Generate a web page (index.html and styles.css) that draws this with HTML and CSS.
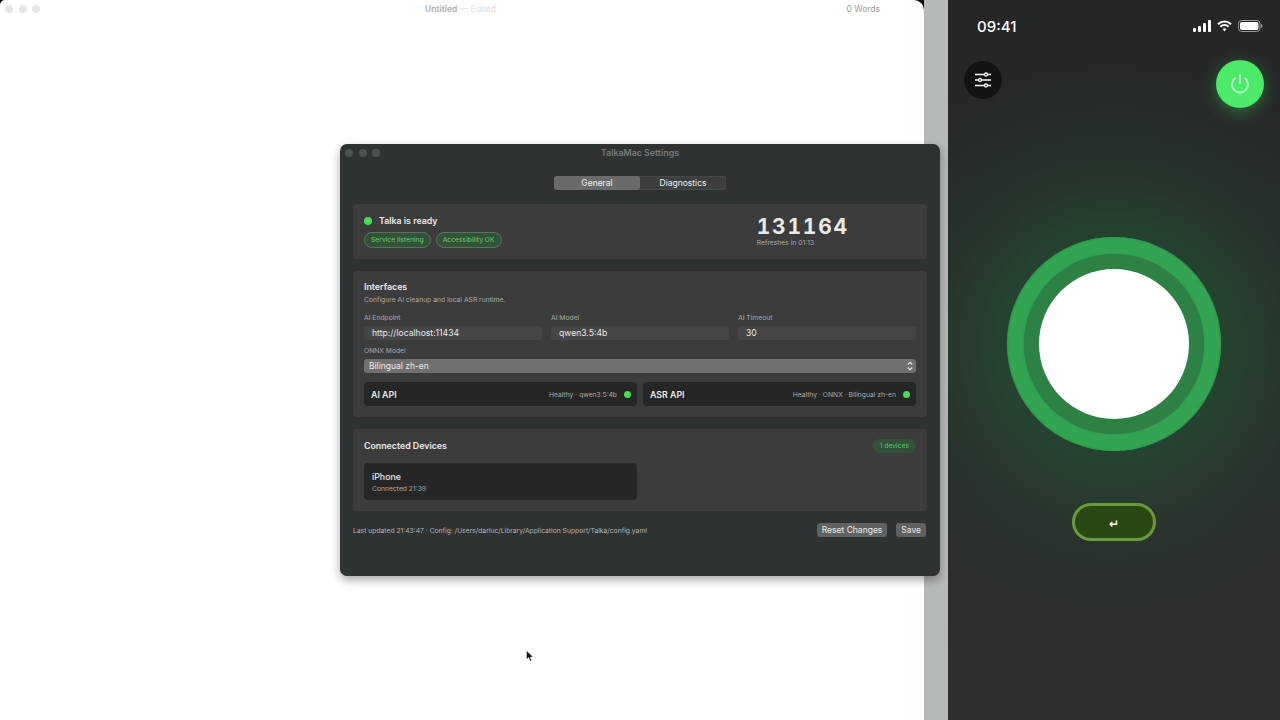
FILE: index.html
```html
<!DOCTYPE html>
<html lang="en">
<head>
  <meta charset="UTF-8">
  <title>TalkaMac Settings</title>
  <link rel="stylesheet" href="styles.css">
</head>
<body>

<div class="desktop">

  <div class="editor">
    <div class="editor-bar">
      <div class="lights lights-light"><i></i><i></i><i></i></div>
      <div class="doc-title"><strong>Untitled</strong> <span>— Edited</span></div>
      <div class="word-count">0 Words</div>
    </div>
  </div>

  <div class="strip"></div>

  <div class="phone">
    <div class="status-bar">
      <span class="clock">09:41</span>
      <div class="status-icons">
        <svg width="18" height="12" viewBox="0 0 18 12" fill="#fff"><rect x="0" y="8" width="3" height="4" rx="1"/><rect x="5" y="6" width="3" height="6" rx="1"/><rect x="10" y="3" width="3" height="9" rx="1"/><rect x="15" y="0" width="3" height="12" rx="1"/></svg>
        <svg width="15" height="12" viewBox="0 0 15 12" fill="none" stroke="#fff" stroke-width="2"><path d="M1 4.200a9.200 9.200 0 0 1 13 0"/><path d="M3.400 6.700a5.800 5.800 0 0 1 8.200 0"/><path d="M7.500 11.400 5.600 9.100a2.800 2.800 0 0 1 3.800 0z" fill="#fff" stroke="none"/></svg>
        <svg width="25" height="12" viewBox="0 0 25 12"><rect x=".5" y=".5" width="21.500" height="11" rx="3.200" fill="none" stroke="#999"/><rect x="2" y="2" width="18.500" height="8" rx="2" fill="#fff"/><path d="M23 4v4c.9-.3 1.500-1 1.500-2s-.6-1.700-1.500-2z" fill="#999"/></svg>
      </div>
    </div>

    <div class="phone-actions">
      <button class="menu-btn">
        <svg width="18" height="16" viewBox="0 0 18 16" fill="none" stroke="#fff" stroke-width="1.300"><path d="M1 2.500h16M1 8h16M1 13.500h16"/><circle cx="12" cy="2.500" r="1.500" fill="#131313"/><circle cx="6" cy="8" r="1.500" fill="#131313"/><circle cx="12" cy="13.500" r="1.500" fill="#131313"/></svg>
      </button>
      <button class="power-btn">
        <svg width="22" height="22" viewBox="0 0 22 22" fill="none" stroke="#b9f7c6" stroke-width="2" stroke-linecap="round"><path d="M11 2v8"/><path d="M6 5.200a8 8 0 1 0 10 0"/></svg>
      </button>
    </div>

    <div class="ring-outer">
      <div class="ring-inner">
        <div class="ring-core"></div>
      </div>
    </div>

    <button class="enter-btn">↵</button>
  </div>

  <div class="settings">
    <div class="settings-bar">
      <div class="lights lights-dark"><i></i><i></i><i></i></div>
      <span class="settings-title">TalkaMac Settings</span>
    </div>

    <div class="settings-body">
      <div class="tabs">
        <div class="tab tab-active">General</div>
        <div class="tab">Diagnostics</div>
      </div>

      <section class="card card-status">
        <div>
          <div class="ready"><i class="dot"></i>Talka is ready</div>
          <div class="pills">
            <span class="pill">Service listening</span>
            <span class="pill">Accessibility OK</span>
          </div>
        </div>
        <div class="pairing">
          <div class="code">131164</div>
          <div class="small muted">Refreshes in 01:13</div>
        </div>
      </section>

      <section class="card card-interfaces">
        <h2>Interfaces</h2>
        <p class="small muted subtitle">Configure AI cleanup and local ASR runtime.</p>

        <div class="fields">
          <div class="field">
            <div class="small muted">AI Endpoint</div>
            <div class="input">http://localhost:11434</div>
          </div>
          <div class="field">
            <div class="small muted">AI Model</div>
            <div class="input">qwen3.5:4b</div>
          </div>
          <div class="field">
            <div class="small muted">AI Timeout</div>
            <div class="input">30</div>
          </div>
        </div>

        <div class="small muted onnx-label">ONNX Model</div>
        <div class="select">
          <span>Bilingual zh-en</span>
          <svg width="6" height="10" viewBox="0 0 6 10" fill="none" stroke="#e8e8e8" stroke-width="1.100"><path d="M.8 3.500 3 1.200l2.200 2.300M.8 6.500 3 8.800l2.200-2.300"/></svg>
        </div>

        <div class="apis">
          <div class="api">
            <b>AI API</b>
            <span class="small muted api-state">Healthy · qwen3.5:4b</span>
            <i class="dot"></i>
          </div>
          <div class="api">
            <b>ASR API</b>
            <span class="small muted api-state">Healthy · ONNX · Bilingual zh-en</span>
            <i class="dot"></i>
          </div>
        </div>
      </section>

      <section class="card card-devices">
        <div class="devices-head">
          <h2>Connected Devices</h2>
          <span class="badge">1 devices</span>
        </div>
        <div class="device">
          <b>iPhone</b>
          <div class="small muted">Connected 21:39</div>
        </div>
      </section>

      <div class="settings-foot">
        <span class="small foot-text">Last updated 21:43:47 · Config: /Users/darluc/Library/Application Support/Talka/config.yaml</span>
        <button class="btn">Reset Changes</button>
        <button class="btn">Save</button>
      </div>
    </div>
  </div>

  <svg class="cursor" width="8" height="12" viewBox="0 0 8 12"><path d="M.5.500v9l2.200-2 1.500 3.800 1.500-.6-1.500-3.600h3z" fill="#111" stroke="#fff" stroke-width=".5"/></svg>
</div>

</body>
</html>
```

FILE: styles.css
```css
* {
  box-sizing: border-box;
}

body {
  margin: 0;
  font-family: 'Inter', 'Liberation Sans', sans-serif;
  background: #000;
}

h2, p {
  margin: 0;
}

button {
  font-family: inherit;
  border: none;
  padding: 0;
}

.desktop {
  position: relative;
  display: flex;
  width: 1280px;
  height: 720px;
  overflow: hidden;
}

/* text editor behind the settings window */
.editor {
  width: 924px;
  height: 720px;
  background: #fff;
  border-radius: 5px 10px 0 0;
}

.editor-bar {
  position: relative;
  display: flex;
  align-items: center;
  height: 17px;
  padding: 0 44px 0 5px;
  font-size: 8.500px;
}

.lights {
  display: flex;
  gap: 5.500px;
}

.lights i {
  display: block;
  width: 8px;
  height: 8px;
  border-radius: 50%;
}

.lights-light i {
  background: #e6e6e6;
}

.lights-dark i {
  background: #4d5050;
}

.doc-title {
  margin-left: 385px;
  color: #e0e0e0;
}

.doc-title strong {
  font-weight: 600;
  color: #aeaeae;
}

.word-count {
  margin-left: auto;
  color: #9a9a9a;
}

.strip {
  width: 24px;
  background: #b6b9b9;
}

/* phone */
.phone {
  display: flex;
  flex-direction: column;
  align-items: center;
  width: 332px;
  background:
    radial-gradient(circle at 166px 344px, rgba(32, 100, 55, 0.55) 0, rgba(32, 96, 52, 0.42) 115px, rgba(32, 90, 50, 0.12) 200px, rgba(32, 90, 50, 0) 290px),
    linear-gradient(#252727, #2e3030);
  color: #fff;
}

.status-bar {
  display: flex;
  align-items: center;
  justify-content: space-between;
  width: 100%;
  height: 18px;
  margin-top: 17px;
  padding: 0 17px 0 29px;
}

.clock {
  font-size: 15px;
  font-weight: 500;
}

.status-icons {
  display: flex;
  align-items: center;
  gap: 6px;
}

.phone-actions {
  display: flex;
  align-items: flex-start;
  justify-content: space-between;
  width: 100%;
  margin-top: 25px;
  padding: 0 16px;
}

.menu-btn {
  display: flex;
  align-items: center;
  justify-content: center;
  width: 38px;
  height: 38px;
  margin-top: 1px;
  border-radius: 50%;
  background: #131313;
}

.power-btn {
  display: flex;
  align-items: center;
  justify-content: center;
  width: 48px;
  height: 48px;
  border-radius: 50%;
  background: #4bea68;
  box-shadow: 0 4px 16px rgba(75, 234, 104, 0.35);
}

.ring-outer {
  display: flex;
  align-items: center;
  justify-content: center;
  width: 214px;
  height: 214px;
  margin-top: 129px;
  border-radius: 50%;
  background: #33a552;
  box-shadow: inset 0 0 2px #2a7f48, 0 0 1px #2e8a4b;
}

.ring-inner {
  display: flex;
  align-items: center;
  justify-content: center;
  width: 180px;
  height: 180px;
  border-radius: 50%;
  background: #2d8145;
  box-shadow: 0 0 2px #2d8145;
}

.ring-core {
  width: 150px;
  height: 150px;
  border-radius: 50%;
  background: #fff;
}

.enter-btn {
  width: 84px;
  height: 38px;
  margin-top: 52px;
  padding-top: 4px;
  border: 3px solid #6a9a3a;
  border-radius: 19px;
  background: #2a4814;
  color: #f2f5ee;
  font-size: 12px;
  font-weight: 700;
  font-family: 'DejaVu Sans', sans-serif;
}

/* settings window */
.settings {
  position: absolute;
  left: 340px;
  top: 144px;
  width: 600px;
  height: 432px;
  background: #2f3232;
  border-radius: 7px;
  box-shadow: 0 4px 10px rgba(0, 0, 0, 0.35);
  color: #eaeaea;
}

.settings-bar {
  position: relative;
  display: flex;
  align-items: center;
  justify-content: center;
  height: 17px;
}

.settings-bar .lights {
  position: absolute;
  left: 5px;
  top: 5px;
}

.settings-title {
  font-size: 8.800px;
  font-weight: 600;
  color: #777a7a;
}

.settings-body {
  display: flex;
  flex-direction: column;
  padding: 15px 13px 0;
}

.tabs {
  display: flex;
  align-self: center;
  width: 172px;
  height: 14px;
  border-radius: 3px;
  background: #3d3f3f;
  box-shadow: inset 0 0 0 0.5px #515353;
}

.tab {
  flex: 1;
  font-size: 8.500px;
  line-height: 14px;
  text-align: center;
  color: #f0f0f0;
}

.tab-active {
  background: #6a6b6b;
  border-radius: 3px;
}

.card {
  margin-top: 12px;
  padding: 11px;
  background: #3c3c3c;
  border-radius: 4px;
}

.card-status {
  display: flex;
  justify-content: space-between;
  height: 55px;
  margin-top: 14px;
  padding: 11px 78px 0 11px;
}

.card-interfaces {
  height: 146px;
  padding-top: 10px;
}

.card-devices {
  height: 82px;
  padding-top: 10px;
}

.small {
  font-size: 6.750px;
  line-height: 9px;
}

.muted {
  color: #a8a8a8;
}

.dot {
  display: block;
  flex: none;
  width: 7px;
  height: 7px;
  border-radius: 50%;
  background: #45dc5c;
}

.ready {
  display: flex;
  align-items: center;
  gap: 7px;
  height: 11px;
  font-size: 8.800px;
  font-weight: 600;
}

.ready .dot {
  width: 8px;
  height: 8px;
}

.pills {
  display: flex;
  gap: 5px;
  margin-top: 6px;
}

.pill {
  padding: 0 6px;
  font-size: 6.750px;
  line-height: 14px;
  color: #5fd06f;
  background: #35503a;
  border: 0.5px solid #4f7a55;
  border-radius: 8px;
}

.code {
  font-size: 21px;
  line-height: 23px;
  font-weight: 700;
  font-variant-numeric: tabular-nums;
  letter-spacing: 1.800px;
  color: #e8e8e8;
}

h2 {
  font-size: 8.800px;
  line-height: 12px;
  font-weight: 600;
}

.subtitle {
  margin-top: 2px;
}

.fields {
  display: grid;
  grid-template-columns: repeat(3, 178px);
  gap: 9px;
  margin-top: 9px;
}

.input {
  height: 14px;
  margin-top: 4px;
  padding-left: 8px;
  font-size: 8.600px;
  line-height: 14px;
  background: #464646;
  border-radius: 3px;
}

.onnx-label {
  margin-top: 6px;
}

.select {
  display: flex;
  align-items: center;
  justify-content: space-between;
  height: 14px;
  margin-top: 4px;
  padding: 0 3px 0 5px;
  font-size: 8.500px;
  background: #707070;
  border-radius: 3px;
}

.apis {
  display: grid;
  grid-template-columns: 273px 273px;
  gap: 6px;
  margin-top: 9px;
}

.api {
  display: flex;
  align-items: center;
  height: 24px;
  padding: 0 6px 0 7px;
  background: #262626;
  border-radius: 4px;
  font-size: 8.800px;
}

.api b {
  font-weight: 600;
}

.api-state {
  margin-left: auto;
  margin-right: 7px;
}

.devices-head {
  display: flex;
  align-items: center;
  justify-content: space-between;
  height: 14px;
}

.badge {
  padding: 0 7px;
  font-size: 6.750px;
  line-height: 14px;
  color: #55c466;
  background: #33503a;
  border-radius: 7px;
}

.device {
  width: 273px;
  height: 37px;
  margin-top: 10px;
  padding: 8px 8px 0;
  background: #262626;
  border-radius: 4px;
  font-size: 8.800px;
  line-height: 12px;
}

.device b {
  font-weight: 500;
}

.device .small {
  margin-top: 1px;
}

.settings-foot {
  display: flex;
  align-items: center;
  gap: 9px;
  margin-top: 12px;
  padding-right: 1px;
}

.foot-text {
  margin-right: auto;
  color: #b4b4b4;
}

.btn {
  height: 14px;
  padding: 0 5px;
  font-size: 8.500px;
  color: #eaeaea;
  background: #606262;
  border-radius: 3px;
}

.cursor {
  position: absolute;
  left: 526px;
  top: 650px;
}
```
